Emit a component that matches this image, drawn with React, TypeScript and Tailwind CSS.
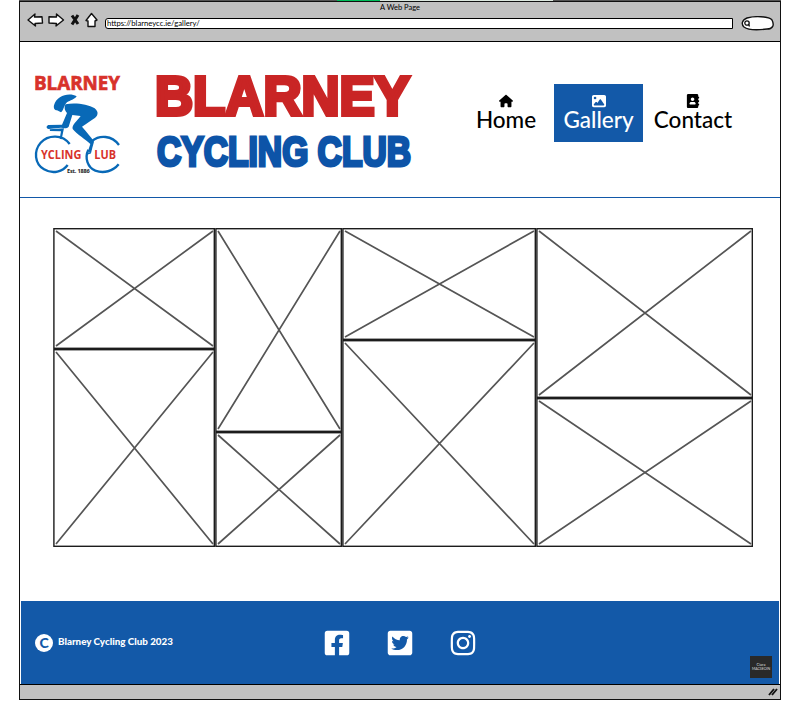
import React from "react";
import {
  FaAddressBook,
  FaFacebookSquare,
  FaInstagram,
  FaTwitterSquare,
} from "react-icons/fa";
import { FaHouse, FaImage } from "react-icons/fa6";

type Size = { w: number; h: number };

const columns: Size[][] = [
  [{ w: 162, h: 121 }, { w: 162, h: 198 }],
  [{ w: 127, h: 204 }, { w: 127, h: 115 }],
  [{ w: 194, h: 112 }, { w: 194, h: 207 }],
  [{ w: 217, h: 170 }, { w: 217, h: 149 }],
];

function Placeholder({ w, h }: Size) {
  return (
    <svg width={w} height={h} className="block" fill="none">
      <rect x="0.9" y="0.7" width={w - 1.6} height={h - 1.4} stroke="#1c1c1c" strokeWidth="1.4" />
      <path
        d={`M3 3L${w - 2} ${h - 3}M${w - 2} 3L3 ${h - 3}`}
        stroke="#555"
        strokeWidth="1.7"
      />
    </svg>
  );
}

function BrowserBar() {
  return (
    <div className="flex h-[40px] flex-col border-b-[1.5px] border-black bg-[#c1c1c1]">
      <div className="h-[12px] text-center text-[7.5px] leading-[12px] text-black">A Web Page</div>
      <div className="flex h-[17px] items-center pl-[7px]">
        <svg width="72" height="20" viewBox="0 0 72 20" className="mt-[-3px] shrink-0" fill="white" stroke="#111" strokeWidth="1.4" strokeLinejoin="round">
          <path d="M1 9L8 3L7.500 6L15 5.700L15.500 12L8 12.500L8.500 15Z" />
          <path d="M36.500 9L29.500 3L29.500 6L22 5.800L22 12L29.500 12.500L29 15Z" />
          <path d="M45 4.500L51 13M51 4L45 13.500" fill="none" strokeWidth="3" />
          <path d="M64.500 2.500L70 9L68 10L68 15.500L61 15.500L61 10L59 9.500Z" />
        </svg>
        <div className="ml-[6px] mt-[1px] flex h-[11px] w-[628px] shrink-0 items-center rounded-l-[3px] border-[1.5px] border-black bg-white pl-[1px] text-[7.7px] leading-[9px] text-black">
          https://blarneycc.ie/gallery/
        </div>
        <svg width="34" height="15" viewBox="0 0 34 15" className="ml-[8px] mt-[1px] shrink-0">
          <path d="M6 2C13 0 28 0 31 4C34 10 31 13 26 13C18 14 7 14 3 11C0 8 1 4 6 2Z" fill="white" stroke="#111" strokeWidth="1.4" />
          <circle cx="6" cy="7" r="2.2" fill="none" stroke="#111" strokeWidth="1.3" />
          <path d="M7.500 8L8.500 10.500" stroke="#111" strokeWidth="1.3" />
        </svg>
      </div>
    </div>
  );
}

function CyclistLogo() {
  return (
    <svg width="120" height="130" viewBox="0 0 360 390" className="shrink-0" fontFamily="Open Sans, sans-serif">
      <text x="42" y="91" fontSize="57" fontWeight="700" fill="#d8322b" stroke="#d8322b" strokeWidth="2" textLength="258" lengthAdjust="spacingAndGlyphs">BLARNEY</text>
      <g transform="translate(-2 -1)">
        <g fill="#0869b7">
          <path d="M172 110C150 98 112 107 104 137C102 146 106 152 113 152L125 158C133 153 133 138 143 128C153 122 165 120 172 110Z" />
          <path d="M139 134C165 128 205 133 226 146C240 157 236 171 222 178L188 201C202 218 216 232 224 246L219 264L215 281L206 274L213 253C199 239 173 225 160 208C157 196 172 185 184 169L159 166L148 201C143 207 134 206 125 204L88 208C80 206 80 199 87 196L128 195L143 160C134 151 135 140 139 134Z" />
          <path d="M91 209L134 206L132 215L127 239L121 237L125 215L92 214Z" />
        </g>
        <g fill="none" stroke="#0869b7">
          <path d="M151 253C130 224 87 224 64 249C42 274 46 313 74 329C101 345 131 335 145 316" strokeWidth="7" />
          <path d="M299 256C277 226 240 226 218 244" strokeWidth="7" />
          <path d="M207 270C195 295 205 323 228 333C253 342 281 335 298 314" strokeWidth="7" />
          <path d="M214 279L202 283" strokeWidth="5" />
        </g>
      </g>
      <g fill="#d8322b" fontSize="35" fontWeight="700">
        <text x="63" y="298" textLength="121" lengthAdjust="spacingAndGlyphs">YCLING</text>
        <text x="223" y="298" textLength="65" lengthAdjust="spacingAndGlyphs">LUB</text>
      </g>
      <text x="141" y="338" fontSize="17" fontWeight="700" fill="#222" textLength="68">Est. 1886</text>
    </svg>
  );
}

function Title() {
  return (
    <svg width="272" height="120" viewBox="0 0 272 120" className="shrink-0 overflow-visible" fontFamily="Liberation Sans, Arial, sans-serif" fontWeight="700">
      <text x="1" y="47.500" fontSize="55" fill="#c92525" stroke="#c92525" strokeWidth="4" textLength="255" lengthAdjust="spacingAndGlyphs">BLARNEY</text>
      <text x="3" y="99" fontSize="42.500" fill="#0d54a8" stroke="#0d54a8" strokeWidth="3.2" textLength="254" lengthAdjust="spacingAndGlyphs">CYCLING CLUB</text>
    </svg>
  );
}

function NavItem({ icon, label, className }: { icon: React.ReactNode; label: string; className: string }) {
  return (
    <a className={`flex h-[58px] flex-col items-center pt-[10px] text-[22.5px] font-medium leading-[24px] ${className}`}>
      <span className="flex h-[14px] items-center text-[14px]">{icon}</span>
      <span className="whitespace-nowrap">{label}</span>
    </a>
  );
}

export default function App() {
  return (
    <div className="h-[722px] w-[800px] overflow-hidden bg-white pl-[19px] font-['Lato','Noto_Sans',sans-serif]">
      <div className="flex h-px w-[762px] bg-[#555]">
        <div className="ml-[318px] w-[43px] bg-[#00bd59]" />
        <div className="w-[173px] bg-[#dce8df]" />
      </div>
      <div className="flex h-[699px] w-[762px] flex-col border-[1.5px] border-[#111]">
        <BrowserBar />
        <header className="flex h-[155px] shrink-0">
          <div className="pt-[18px]"><CyclistLogo /></div>
          <div className="ml-[14px] pt-[25px]"><Title /></div>
          <nav className="ml-[42px] mt-[42px] flex">
            <NavItem icon={<FaHouse />} label="Home" className="w-[76px] text-black" />
            <NavItem icon={<FaImage />} label="Gallery" className="ml-[10px] w-[89px] bg-[#1359a8] text-white" />
            <NavItem icon={<FaAddressBook />} label="Contact" className="w-[100px] text-black" />
          </nav>
        </header>
        <div className="h-px shrink-0 bg-[#1258a8]" />
        <main className="flex h-[403px] shrink-0 pl-[33px] pt-[30px]">
          {columns.map((column, i) => (
            <div key={i} className="flex flex-col">
              {column.map((cell, j) => <Placeholder key={j} {...cell} />)}
            </div>
          ))}
        </main>
        <footer className="mx-px flex h-[83px] shrink-0 items-center bg-[#1359a8] text-white">
          <div className="ml-[14px] flex size-[18px] shrink-0 items-center justify-center rounded-full bg-white text-[14px] font-black text-[#1359a8]">C</div>
          <span className="ml-[5px] w-[116px] shrink-0 whitespace-nowrap pb-[2px] text-[9.8px] font-black">Blarney Cycling Club 2023</span>
          <div className="ml-[149px] flex gap-[35px] text-[28px]">
            <FaFacebookSquare />
            <FaTwitterSquare />
            <FaInstagram />
          </div>
          <div className="ml-[273px] mt-[49px] flex size-[22px] flex-col items-center justify-center bg-[#292929] text-[4px] leading-[5px] text-[#ddd]">
            <span>Ciara</span><span className="text-[3.5px]">MACSEOIN</span>
          </div>
        </footer>
        <div className="flex grow items-center justify-end border-t-[1.5px] border-black bg-[#c1c1c1]">
          <svg width="12" height="10" viewBox="0 0 12 10" stroke="#111" strokeWidth="1.9">
            <path d="M1 8L6 2M4 8L9 2" />
          </svg>
        </div>
      </div>
    </div>
  );
}
